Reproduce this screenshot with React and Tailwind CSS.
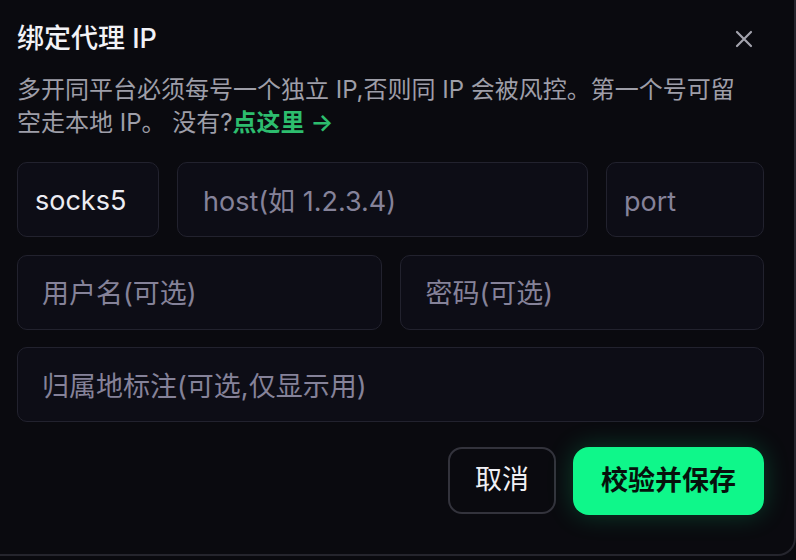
import React, { useState } from "react";

const font = { fontFamily: 'Inter, "Noto Sans CJK SC", sans-serif' };

function BindProxyDialog() {
  const [form, setForm] = useState({
    type: "socks5",
    host: "",
    port: "",
    user: "",
    pass: "",
    note: ""
  });

  const handleChange = (e) => {
    setForm({ ...form, [e.target.name]: e.target.value });
  };

  const inputCls =
    "h-[75px] rounded-[10px] border-[1.5px] border-[#22222e] bg-[#0d0d16] pt-[3px] text-[27px] text-[#ececf2] outline-none placeholder:text-[#858299]";

  return (
    <div className="h-[556px] w-full border-b-2 border-r-2 border-[#25252d] rounded-br-[18px] bg-[#0a0a0f] pl-[17px] pr-[30px] pt-[21px]">
      <div className="flex items-center justify-between">
        <h2 className="text-[27px] leading-[36px] font-medium text-[#f2f2f6]">
          绑定代理 IP
        </h2>
        <button className="mr-[10px] text-[#a3a3ad]">
          <svg width="20" height="20" viewBox="0 0 20 20" fill="none">
            <path
              d="M3 3L17 17M17 3L3 17"
              stroke="currentColor"
              strokeWidth="2.2"
              strokeLinecap="round"
            />
          </svg>
        </button>
      </div>

      <p className="mt-[16px] max-w-[735px] text-[24px] leading-[33px] text-[#9e9ea8]">
        多开同平台必须每号一个独立 IP,否则同 IP 会被风控。第一个号可留空走本地 IP。 没有?
        <span className="font-semibold text-[#2dbd6e]">点这里 →</span>
      </p>

      <div className="mt-[23px] flex flex-col gap-[17.5px]">
        <div className="flex gap-[18px]">
          <select
            name="type"
            value={form.type}
            onChange={handleChange}
            className={`${inputCls} w-[142px] appearance-none pl-[17px]`}
          >
            <option value="socks5">socks5</option>
            <option value="http">http</option>
          </select>
          <input
            name="host"
            value={form.host}
            onChange={handleChange}
            placeholder="host(如 1.2.3.4)"
            className={`${inputCls} min-w-0 flex-1 pl-[25px]`}
          />
          <input
            name="port"
            value={form.port}
            onChange={handleChange}
            placeholder="port"
            className={`${inputCls} w-[158px] pl-[17px]`}
          />
        </div>
        <div className="grid grid-cols-2 gap-[18px]">
          <input
            name="user"
            value={form.user}
            onChange={handleChange}
            placeholder="用户名(可选)"
            className={`${inputCls} min-w-0 pl-[24px]`}
          />
          <input
            name="pass"
            type="password"
            value={form.pass}
            onChange={handleChange}
            placeholder="密码(可选)"
            className={`${inputCls} min-w-0 pl-[25px]`}
          />
        </div>
        <input
          name="note"
          value={form.note}
          onChange={handleChange}
          placeholder="归属地标注(可选,仅显示用)"
          className={`${inputCls} w-full pl-[24px]`}
        />
      </div>

      <div className="mt-[25px] flex justify-end gap-[17px]">
        <button className="h-[67px] w-[108px] rounded-[14px] border-2 border-[#33333c] bg-[#0a0a0f] text-[27px] text-[#f0f0f5]">
          取消
        </button>
        <button className="h-[68px] w-[191px] rounded-[16px] bg-[#0ff78a] text-[27px] font-semibold text-[#06120c] shadow-[0_0_26px_rgba(15,247,138,0.22)]">
          校验并保存
        </button>
      </div>
    </div>
  );
}

export default function App() {
  return (
    <div className="min-h-[560px] bg-[#0a0a0f]" style={font}>
      <BindProxyDialog />
    </div>
  );
}
